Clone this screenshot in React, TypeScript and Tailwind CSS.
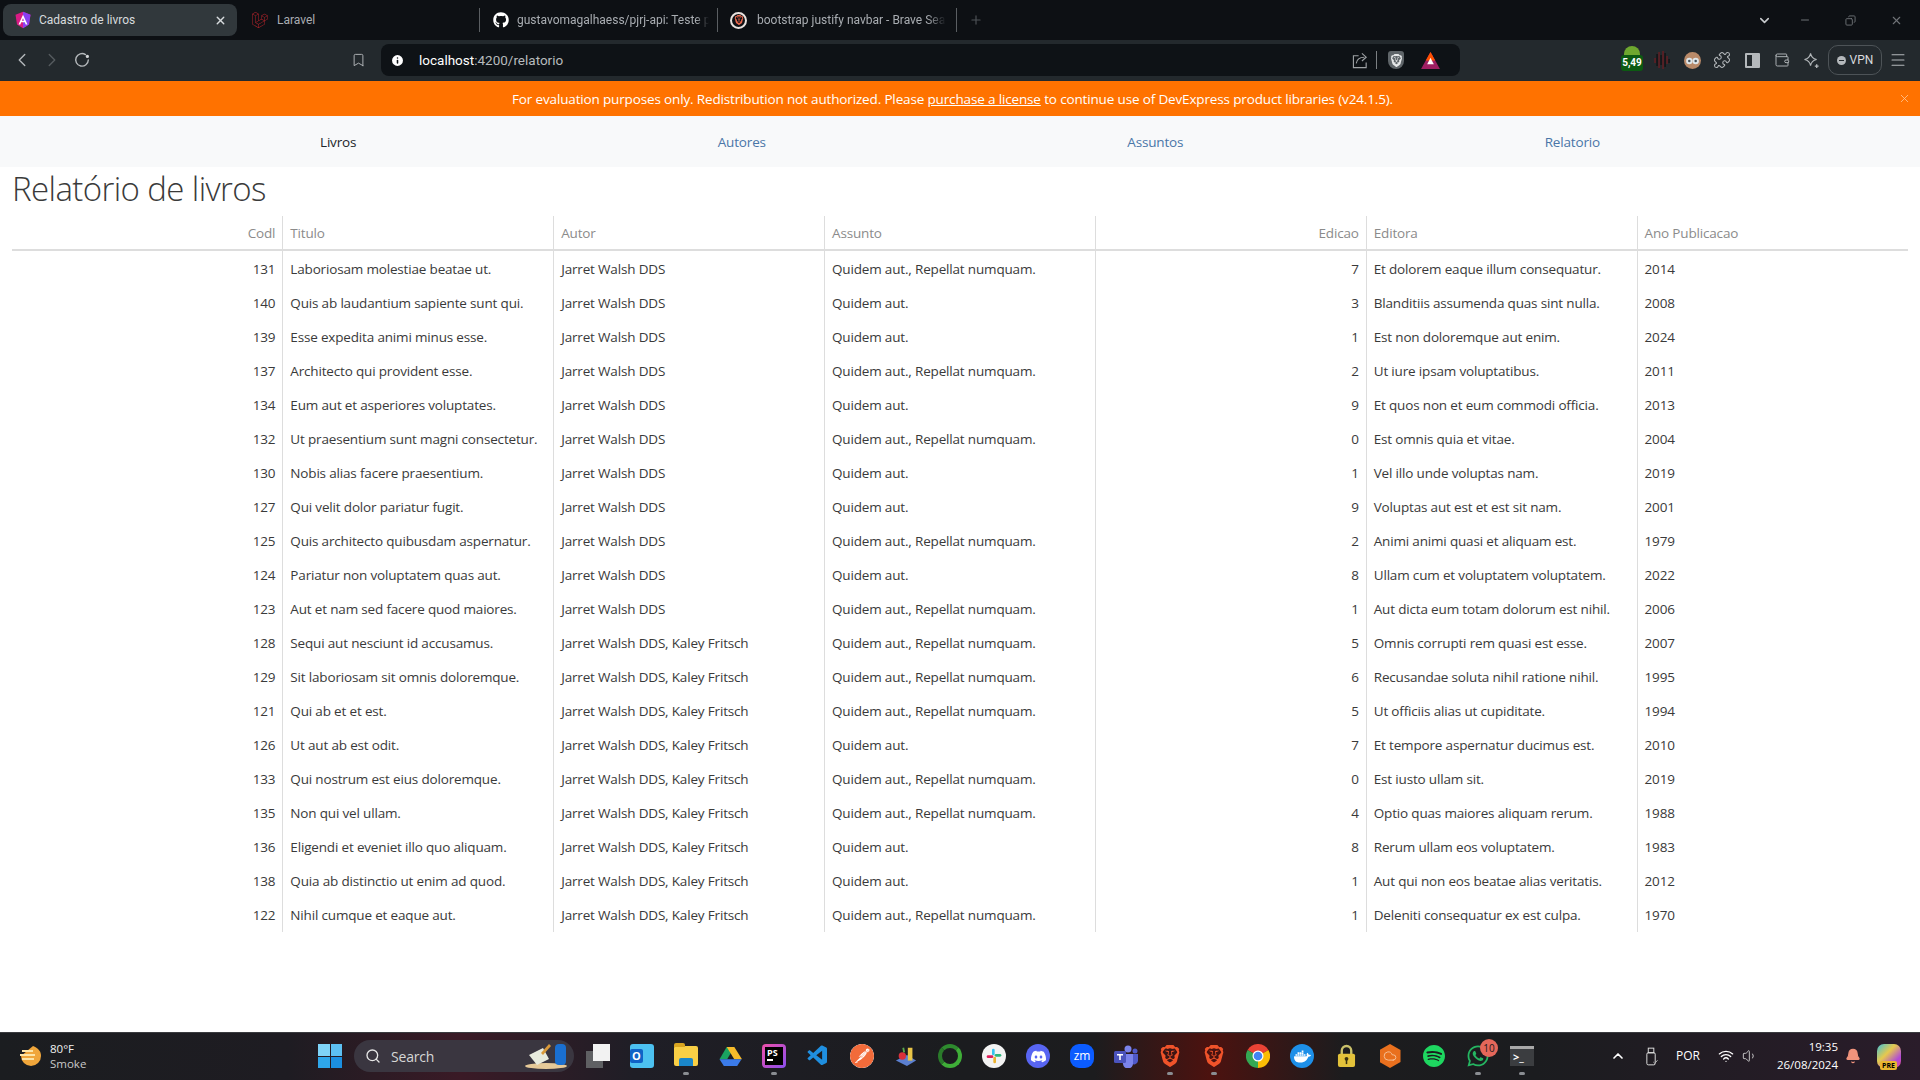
import React from "react";
import { ChevronLeft, ChevronRight, Bookmark, Info, X, Plus, ChevronDown, Minus, Copy, Puzzle, Wallet, Menu, Search, ChevronUp, Wifi, Volume1, Bell, Cloud } from "lucide-react";
import { FaGithub, FaWhatsapp } from "react-icons/fa";
import { SiLaravel, SiBrave, SiPostman, SiDiscord, SiDocker, SiSpotify } from "react-icons/si";
import { VscVscode } from "react-icons/vsc";

const A = "Quidem aut.";
const AB = "Quidem aut., Repellat numquam.";
const J = "Jarret Walsh DDS";
const JK = "Jarret Walsh DDS, Kaley Fritsch";
const rows: [number, string, string, string, number, string, number][] = [
  [131, "Laboriosam molestiae beatae ut.", J, AB, 7, "Et dolorem eaque illum consequatur.", 2014],
  [140, "Quis ab laudantium sapiente sunt qui.", J, A, 3, "Blanditiis assumenda quas sint nulla.", 2008],
  [139, "Esse expedita animi minus esse.", J, A, 1, "Est non doloremque aut enim.", 2024],
  [137, "Architecto qui provident esse.", J, AB, 2, "Ut iure ipsam voluptatibus.", 2011],
  [134, "Eum aut et asperiores voluptates.", J, A, 9, "Et quos non et eum commodi officia.", 2013],
  [132, "Ut praesentium sunt magni consectetur.", J, AB, 0, "Est omnis quia et vitae.", 2004],
  [130, "Nobis alias facere praesentium.", J, A, 1, "Vel illo unde voluptas nam.", 2019],
  [127, "Qui velit dolor pariatur fugit.", J, A, 9, "Voluptas aut est et est sit nam.", 2001],
  [125, "Quis architecto quibusdam aspernatur.", J, AB, 2, "Animi animi quasi et aliquam est.", 1979],
  [124, "Pariatur non voluptatem quas aut.", J, A, 8, "Ullam cum et voluptatem voluptatem.", 2022],
  [123, "Aut et nam sed facere quod maiores.", J, AB, 1, "Aut dicta eum totam dolorum est nihil.", 2006],
  [128, "Sequi aut nesciunt id accusamus.", JK, AB, 5, "Omnis corrupti rem quasi est esse.", 2007],
  [129, "Sit laboriosam sit omnis doloremque.", JK, AB, 6, "Recusandae soluta nihil ratione nihil.", 1995],
  [121, "Qui ab et et est.", JK, AB, 5, "Ut officiis alias ut cupiditate.", 1994],
  [126, "Ut aut ab est odit.", JK, A, 7, "Et tempore aspernatur ducimus est.", 2010],
  [133, "Qui nostrum est eius doloremque.", JK, AB, 0, "Est iusto ullam sit.", 2019],
  [135, "Non qui vel ullam.", JK, AB, 4, "Optio quas maiores aliquam rerum.", 1988],
  [136, "Eligendi et eveniet illo quo aliquam.", JK, A, 8, "Rerum ullam eos voluptatem.", 1983],
  [138, "Quia ab distinctio ut enim ad quod.", JK, A, 1, "Aut qui non eos beatae alias veritatis.", 2012],
  [122, "Nihil cumque et eaque aut.", JK, AB, 1, "Deleniti consequatur ex est culpa.", 1970],
];
const heads = ["Codl", "Titulo", "Autor", "Assunto", "Edicao", "Editora", "Ano Publicacao"];

function Slot({ children, dot }: { children: React.ReactNode; dot?: boolean }) {
  return (
    <div className="relative w-[44px] h-full flex items-center justify-center shrink-0">
      {children}
      {dot && <span className="absolute left-[19px] bottom-[4px] w-[6px] h-[3px] rounded-full bg-[#8a8d92]" />}
    </div>
  );
}

function Tool({ children }: { children: React.ReactNode }) {
  return <div className="w-[30px] h-full flex items-center justify-center shrink-0">{children}</div>;
}

export default function App() {
  return (
    <div className="w-[1920px] h-[1080px] overflow-hidden flex flex-col bg-white font-['Open_Sans','Noto_Sans',sans-serif]">
      {/* tabs */}
      <div className="h-[40px] shrink-0 bg-[#0d1014] flex items-center text-[12px] font-['Roboto',sans-serif] text-[#a9adb2]">
        <div className="ml-[3px] w-[234px] h-[32px] rounded-[8px] bg-[#31383c] flex items-center pl-[11px] pr-[10px] text-[#d8dbde]">
          <svg viewBox="0 0 24 24" className="w-[18px] h-[18px] shrink-0"><path d="M12 1 2 5l2 13 8 5 8-5 2-13z" fill="#d81b84" /><path d="M12 1v22l8-5 2-13z" fill="#8a3ff2" /><path d="M12 5 6 18h2.4l1.2-3h4.8l1.2 3H18zm-1.5 8L12 9.6 13.5 13z" fill="#fff" /></svg>
          <span className="ml-[7px] flex-1">Cadastro de livros</span>
          <X className="w-[13px] h-[13px] text-[#d8dbde]" strokeWidth={2.5} />
        </div>
        <div className="ml-[14px] w-[228px] flex items-center">
          <SiLaravel className="w-[16px] h-[16px] text-[#b3242b] ml-[1px]" />
          <span className="ml-[9px]">Laravel</span>
        </div>
        <div className="w-px h-[24px] bg-[#5a5e62]" />
        <div className="w-[237px] flex items-center pl-[13px] overflow-hidden">
          <FaGithub className="w-[16px] h-[16px] text-white shrink-0" />
          <span className="ml-[8px] whitespace-nowrap w-[192px] overflow-hidden [mask-image:linear-gradient(90deg,#000_93%,transparent)]">gustavomagalhaess/pjrj-api: Teste p</span>
        </div>
        <div className="w-px h-[24px] bg-[#5a5e62]" />
        <div className="w-[238px] flex items-center pl-[12px] overflow-hidden">
          <div className="relative w-[17px] h-[17px] rounded-full border-2 border-[#e9e2de] flex items-center justify-center shrink-0">
            <SiBrave className="w-[10px] h-[10px] text-[#e8674d]" />
          </div>
          <span className="ml-[10px] whitespace-nowrap w-[189px] overflow-hidden [mask-image:linear-gradient(90deg,#000_90%,transparent)]">bootstrap justify navbar - Brave Sea</span>
        </div>
        <div className="w-px h-[24px] bg-[#5a5e62]" />
        <Plus className="ml-[12px] w-[14px] h-[14px] text-[#4e5256]" />
        <div className="flex-1" />
        <ChevronDown className="w-[15px] h-[15px] text-[#c8cbce]" strokeWidth={2.5} />
        <Minus className="ml-[27px] w-[12px] h-[12px] text-[#6f7377]" />
        <Copy className="ml-[34px] w-[11px] h-[11px] text-[#6f7377] -scale-x-100" />
        <X className="ml-[34px] mr-[17px] w-[13px] h-[13px] text-[#6f7377]" />
      </div>
      {/* toolbar */}
      <div className="h-[41px] shrink-0 bg-[#23292d] flex items-center pl-[7px] pb-[1px] text-[#b4b8bb]">
        <Tool><ChevronLeft className="w-[22px] h-[22px] text-[#b4b8bb]" strokeWidth={1.5} /></Tool>
        <Tool><ChevronRight className="w-[22px] h-[22px] text-[#565b5f]" strokeWidth={1.5} /></Tool>
        <Tool>
          <svg viewBox="0 0 16 16" className="w-[16px] h-[16px]" fill="none"><path d="M11.5 2.6A6.3 6.3 0 1 0 14.3 8" stroke="#b4b8bb" strokeWidth="1.4" strokeLinecap="round" /><circle cx="13.4" cy="4.4" r="1.6" fill="#d4d7d9" /></svg>
        </Tool>
        <div className="ml-[251px] w-[20px] flex justify-center"><Bookmark className="w-[15px] h-[16px]" strokeWidth={1.5} /></div>
        <div className="ml-[13px] w-[1079px] h-[32px] rounded-[8px] bg-[#0e1216] flex items-center pl-[9px] pr-[20px]">
          <Info className="w-[15px] h-[15px] text-[#0e1216] fill-white shrink-0" strokeWidth={2.5} />
          <span className="ml-[14px] text-[13.5px] font-['Roboto',sans-serif] text-[#b6babd]"><span className="text-white">localhost</span>:4200/relatorio</span>
          <div className="flex-1" />
          <svg viewBox="0 0 18 18" className="w-[17px] h-[17px]" fill="none" stroke="#9ea2a5" strokeWidth="1.2"><path d="M7 4H1.5v12.5H15V11" /><path d="M4.5 12C5 8 8 5.5 13 5.5" /><path d="M10.5 1.5 15 5.5l-4.5 4" /></svg>
          <div className="ml-[7px] w-px h-[18px] bg-[#7b7f82]" />
          <div className="ml-[11px] w-[16px] h-[18px] rounded-b-[8px] rounded-t-[3px] bg-[#5f6569] flex items-center justify-center">
            <SiBrave className="w-[13px] h-[13px] text-[#e5e7e8]" />
          </div>
          <svg viewBox="0 0 20 18" className="ml-[17px] w-[19px] h-[17px]"><path d="M10 0 20 18H0z" fill="#9e1f63" /><path d="M10 0 15 9H5z" fill="#ff5000" /><path d="m10 6 3.5 7h-7z" fill="#fff" /></svg>
        </div>
        <div className="ml-[161px] w-[22px] h-[30px] flex flex-col items-center">
          <div className="w-[16px] h-[9px] mt-[1px] rounded-t-full bg-[#6ea82f]" />
          <div className="w-[22px] h-[16px] rounded-[3px] bg-[#0c5a12] text-white text-[10px] font-bold leading-[16px] text-center font-['Roboto',sans-serif]">5,49</div>
        </div>
        <svg viewBox="0 0 16 18" className="ml-[11px] w-[16px] h-[18px]">
          {[1, 3, 5, 7, 9, 11, 13, 15].map((x, i) => <rect key={x} x={x - 0.5} y={[7, 3, 1, 4, 0, 2, 5, 8][i]} width="1.1" height={[5, 12, 16, 10, 18, 14, 8, 4][i]} fill={i % 2 ? "#0c0c0e" : "#7a1a20"} />)}
        </svg>
        <svg viewBox="0 0 16 16" className="ml-[14px] w-[17px] h-[17px]"><circle cx="8" cy="8" r="8" fill="#b98a69" /><circle cx="5" cy="8.5" r="3" fill="#dfe6ea" /><circle cx="11" cy="8.5" r="3" fill="#dfe6ea" /><circle cx="5" cy="8.5" r="1.2" fill="#46525a" /><circle cx="11" cy="8.5" r="1.2" fill="#46525a" /></svg>
        <div className="ml-[12px]"><Puzzle className="w-[18px] h-[18px]" strokeWidth={1.4} /></div>
        <div className="ml-[14px] w-[15px] h-[15px] border-2 border-[#b4b8bb] rounded-[1px] flex justify-end"><div className="w-[6px] h-full bg-[#b4b8bb]" /></div>
        <div className="ml-[14px]"><Wallet className="w-[16px] h-[16px]" strokeWidth={1.4} /></div>
        <div className="ml-[13px]">
          <svg viewBox="0 0 18 18" className="w-[17px] h-[17px]" fill="none" stroke="#b4b8bb" strokeWidth="1.2"><path d="M8 1.5c.6 3.8 2.6 5.7 6.4 6.5-3.8.8-5.8 2.8-6.4 6.5C7.4 10.8 5.4 8.8 1.6 8 5.4 7.2 7.4 5.3 8 1.5z" /><path d="M14.5 13v4M12.5 15h4" strokeWidth="1.4" /></svg>
        </div>
        <div className="ml-[8px] w-[54px] h-[30px] rounded-[10px] border border-[#4d5357] flex items-center justify-center text-[12px] font-['Roboto',sans-serif] text-[#d7dadc]">
          <span className="relative w-[9px] h-[9px] rounded-full bg-[#b4b8bb] mr-[4px] flex items-center justify-center"><span className="w-[5px] h-px bg-[#23292d]" /></span>VPN
        </div>
        <div className="ml-[7px]"><Menu className="w-[18px] h-[18px]" strokeWidth={1.4} /></div>
      </div>
      {/* banner */}
      <div className="relative h-[35px] shrink-0 bg-[#ff7200] flex items-center justify-center pt-[1px] pr-[15px] text-[13.5px] text-white">
        <span className="tracking-[-0.15px]">For evaluation purposes only. Redistribution not authorized. Please <span className="underline">purchase a license</span> to continue use of DevExpress product libraries (v24.1.5).</span>
        <X className="absolute right-[9px] top-[11px] w-[13px] h-[13px] text-[#ffc999]" strokeWidth={1.5} />
      </div>
      {/* nav */}
      <div className="h-[51px] shrink-0 bg-[#f8f9fa] flex items-center justify-between pt-[1px] px-[320px] text-[13.5px] tracking-[-0.17px]">
        <span className="text-[#212529]">Livros</span>
        <span className="text-[#4a76a8]">Autores</span>
        <span className="text-[#4a76a8]">Assuntos</span>
        <span className="text-[#4a76a8]">Relatorio</span>
      </div>
      {/* page */}
      <div className="flex-1 px-[12px] text-[#3a3a3a] min-h-0">
        <h1 className="h-[49px] text-[33px] leading-[44px] font-light text-[#3a3a3a] tracking-[-0.6px]">Relatório de livros</h1>
        <table className="w-full table-fixed border-collapse text-[13.5px] tracking-[-0.17px]">
          <thead>
            <tr className="h-[34px] border-b-2 border-[#dddddd] text-[#8b8b8b]">
              {heads.map((h, i) => (
                <th key={h} className={`font-normal px-[7px] pt-[1px] ${i === 0 || i === 4 ? "text-right" : "text-left"} ${i > 0 ? "border-l border-[#dddddd]" : ""}`}>{h}</th>
              ))}
            </tr>
          </thead>
          <tbody>
            {rows.map((r, n) => (
              <tr key={r[0]} className={n === 0 ? "h-[36px]" : "h-[34px]"}>
                {r.map((c, i) => (
                  <td key={i} className={`px-[7px] whitespace-nowrap ${n === 0 ? "pt-[2px]" : ""} ${i === 0 || i === 4 ? "text-right" : "text-left"} ${i > 0 ? "border-l border-[#dddddd]" : ""}`}>{c}</td>
                ))}
              </tr>
            ))}
          </tbody>
        </table>
      </div>
      {/* taskbar */}
      <div className="h-[48px] shrink-0 border-t border-[#3a3b3f] pb-[1px] bg-[linear-gradient(90deg,#1b1d20_0%,#1e1c22_15%,#3a1a26_24%,#1f1e26_33%,#1b1c1f_50%,#1c1c1e_57%,#4c120f_63%,#1c1c1e_70%,#1b1c1f_80%,#2a1c2a_100%)] flex items-center text-[12px] text-white">
        <div className="w-[308px] h-full flex items-center pl-[19px] shrink-0">
          <svg viewBox="0 0 24 24" className="w-[24px] h-[24px]"><path d="M14 2c5 2 8 5 8 10a10 10 0 0 1-20 0z" fill="#f0a63b" /><path d="M3 7h11M1 11h15M3 15h12" stroke="#fde4a6" strokeWidth="2" /></svg>
          <div className="ml-[7px] -mt-[1px] leading-[15px] text-[11.5px]">
            <div className="text-[#f2f2f2]">80°F</div>
            <div className="text-[#c9c9c9]">Smoke</div>
          </div>
        </div>
        <Slot>
          <div className="grid grid-cols-2 gap-px w-[24px] h-[24px]">
            <div className="bg-[#7fd3f7]" /><div className="bg-[#5dc0f2]" /><div className="bg-[#2ea6ea]" /><div className="bg-[#1b8fe0]" />
          </div>
        </Slot>
        <div className="relative ml-[2px] mr-[2px] w-[220px] h-[32px] rounded-full bg-[#3a3640] flex items-center pl-[11px] shrink-0">
          <Search className="w-[16px] h-[16px] text-[#e6e6e6]" strokeWidth={2} />
          <span className="ml-[10px] text-[14px] text-[#d6d6d6] tracking-[-0.2px]">Search</span>
          <svg viewBox="0 0 46 30" className="absolute right-[5px] top-[1px] w-[46px] h-[30px]"><ellipse cx="23" cy="25" rx="21" ry="3" fill="#e6c998" /><path d="m6 14 14-7 6 11-12 6z" fill="#e8ebdd" /><path d="m18 12 8-9 2 2-8 9z" fill="#d99a3a" /><rect x="32" y="3" width="11" height="21" rx="4" fill="#1a6fd0" /></svg>
        </div>
        <Slot><div className="relative w-[24px] h-[24px]"><div className="absolute left-0 bottom-0 w-[17px] h-[17px] bg-[#5f6063]" /><div className="absolute right-0 top-0 w-[17px] h-[17px] bg-[#f2f2f2]" /></div></Slot>
        <Slot><div className="relative w-[24px] h-[24px] rounded-[3px] bg-[#4cc1f0]"><div className="absolute left-0 top-[5px] w-[13px] h-[14px] rounded-[2px] bg-[#0f62c6] text-[11px] leading-[14px] font-bold text-center">O</div></div></Slot>
        <Slot dot><div className="relative w-[24px] h-[20px] rounded-[2px] bg-[#f9cf45]"><div className="absolute -top-[3px] left-0 w-[11px] h-[4px] rounded-t-[2px] bg-[#d9a520]" /><div className="absolute bottom-0 left-[5px] w-[14px] h-[8px] rounded-t-[2px] bg-[#1a86c9]" /></div></Slot>
        <Slot><svg viewBox="0 0 24 22" className="w-[23px] h-[21px]"><path d="M8 1h8L8.5 14H.5z" fill="#1aa260" /><path d="M8 1h8l8 13h-8z" fill="#f7bb2a" /><path d="M5 21 .5 14h23L19 21z" fill="#3b7bea" /></svg></Slot>
        <Slot dot><div className="relative w-[24px] h-[24px] rounded-[4px] bg-[linear-gradient(135deg,#ee4fa7,#8a4ef0)] p-[3px]"><div className="w-full h-full bg-black text-white text-[9px] font-bold leading-[11px] pl-[2px]">PS<div className="w-[6px] h-[2px] mt-[1px] bg-white" /></div></div></Slot>
        <Slot><VscVscode className="w-[24px] h-[24px] text-[#1f8fe0]" /></Slot>
        <Slot><SiPostman className="w-[24px] h-[24px] text-[#f26b3a] bg-white rounded-full" /></Slot>
        <Slot><svg viewBox="0 0 24 24" className="w-[22px] h-[22px]"><path d="M1 17 13 11l10 6-10 6z" fill="#5b7fd0" /><rect x="14" y="3" width="5" height="14" fill="#e8c447" /><circle cx="8" cy="12" r="4" fill="#d9303a" /><path d="M9 3l1 5" stroke="#5aa84a" strokeWidth="2" /></svg></Slot>
        <Slot><div className="w-[24px] h-[24px] rounded-full border-[4px] border-[#3fae38] border-l-[#2a7a2a] border-t-[#2e8a2e]" /></Slot>
        <Slot><div className="w-[24px] h-[24px] rounded-full bg-[#f3f3f3] flex items-center justify-center"><svg viewBox="0 0 24 24" className="w-[16px] h-[16px]"><rect x="9" y="1" width="4" height="10" rx="2" fill="#36c5f0" /><rect x="13" y="9" width="10" height="4" rx="2" fill="#2eb67d" /><rect x="11" y="13" width="4" height="10" rx="2" fill="#ecb22e" /><rect x="1" y="11" width="10" height="4" rx="2" fill="#e01e5a" /></svg></div></Slot>
        <Slot><div className="w-[24px] h-[24px] rounded-full bg-[#5865f2] flex items-center justify-center"><SiDiscord className="w-[15px] h-[15px] text-white" /></div></Slot>
        <Slot><div className="w-[24px] h-[24px] rounded-[9px] bg-[#0b5cff] flex items-center justify-center text-[12px] text-white leading-none">zm</div></Slot>
        <Slot><svg viewBox="0 0 24 24" className="w-[24px] h-[24px]"><circle cx="14" cy="5" r="3.5" fill="#7b83eb" /><circle cx="21" cy="7" r="2.5" fill="#5059c9" /><path d="M17 10h7v7a4 4 0 0 1-7 2z" fill="#5059c9" /><path d="M7 10h12v9a5 5 0 0 1-10 1z" fill="#7b83eb" /><rect x="0" y="7" width="12" height="12" rx="1.5" fill="#4b53bc" /><path d="M3 10h6v1.5H6.8V16H5.2v-4.5H3z" fill="#fff" /></svg></Slot>
        <Slot dot><SiBrave className="w-[22px] h-[24px] text-[#f0532a]" /></Slot>
        <Slot dot><SiBrave className="w-[22px] h-[24px] text-[#f0532a]" /></Slot>
        <Slot><svg viewBox="0 0 24 24" className="w-[24px] h-[24px]"><path d="M12 12 22.4 6A12 12 0 0 0 1.6 6z" fill="#ea4335" /><path d="M12 12 1.6 6A12 12 0 0 0 12 24z" fill="#34a853" /><path d="M12 12 12 24A12 12 0 0 0 22.4 6z" fill="#fbbc05" /><circle cx="12" cy="12" r="5.5" fill="#fff" /><circle cx="12" cy="12" r="4.3" fill="#4285f4" /></svg></Slot>
        <Slot><div className="w-[24px] h-[24px] rounded-full bg-[#1d8fe8] flex items-center justify-center"><SiDocker className="w-[17px] h-[17px] text-white" /></div></Slot>
        <Slot>
          <svg viewBox="0 0 20 25" className="w-[19px] h-[24px]" fill="none"><path d="M5 11V7a5 5 0 0 1 10 0v4" stroke="#c9c06a" strokeWidth="2.5" /><rect x="1" y="10" width="18" height="14" rx="2" fill="#e3c23a" /><circle cx="10" cy="15.5" r="2" fill="#3a3210" /><rect x="9.2" y="16" width="1.6" height="5" fill="#3a3210" /></svg>
        </Slot>
        <Slot><div className="relative w-[21px] h-[24px] bg-[#e9701e] [clip-path:polygon(50%_0,100%_25%,100%_75%,50%_100%,0_75%,0_25%)] flex items-center justify-center"><Cloud className="w-[14px] h-[14px] text-[#f7c9a4]" strokeWidth={1.5} /></div></Slot>
        <Slot><SiSpotify className="w-[22px] h-[22px] text-[#1ed760]" /></Slot>
        <Slot dot>
          <FaWhatsapp className="w-[24px] h-[24px] text-[#25b561]" />
          <span className="absolute left-[24px] top-[6px] w-[18px] h-[18px] rounded-full bg-[#e4675a] text-[10px] leading-[18px] text-center text-[#1a1a1a]">10</span>
        </Slot>
        <Slot dot><div className="w-[24px] h-[20px] bg-[#3b3d40] relative"><div className="h-[3px] bg-[#a8a8a8]" /><span className="absolute left-[3px] top-[5px] text-[11px] leading-[12px] font-bold text-white">&gt;_</span></div></Slot>
        <div className="ml-[62px] w-[24px] flex justify-center shrink-0"><ChevronUp className="w-[16px] h-[16px]" strokeWidth={2.5} /></div>
        <div className="ml-[9px] w-[24px] flex justify-center shrink-0">
          <svg viewBox="0 0 14 20" className="w-[13px] h-[19px]" fill="none" stroke="#e6e6e6" strokeWidth="1"><rect x="3.5" y="1" width="6" height="5" /><rect x="2" y="6" width="9" height="13" rx="1.5" /><path d="m9 16 1.5 1.5L13.500 14" stroke="#bbbbbb" /></svg>
        </div>
        <div className="ml-[11px] w-[28px] text-center text-[12px] shrink-0">POR</div>
        <div className="ml-[12px] w-[24px] flex justify-center shrink-0"><Wifi className="w-[16px] h-[16px]" /></div>
        <div className="w-[24px] flex justify-center shrink-0"><Volume1 className="w-[16px] h-[16px] text-[#d0d0d0]" strokeWidth={1.4} /></div>
        <div className="w-[76px] text-right text-[11.5px] leading-[18px] shrink-0"><div>19:35</div><div>26/08/2024</div></div>
        <div className="ml-[6px] w-[18px] flex justify-center shrink-0"><Bell className="w-[16px] h-[16px] text-[#f0937c] fill-[#f0937c]" /></div>
        <div className="relative ml-[15px] w-[24px] h-[24px] shrink-0 rounded-[7px] bg-[linear-gradient(135deg,#3fc1d8,#e7c94d_40%,#b04ad6_75%,#e44d8a)]">
          <span className="absolute -bottom-[2px] left-[3px] px-[2px] rounded-[2px] bg-[#e9b730] text-[7px] leading-[9px] font-bold text-black">PRE</span>
        </div>
      </div>
    </div>
  );
}
